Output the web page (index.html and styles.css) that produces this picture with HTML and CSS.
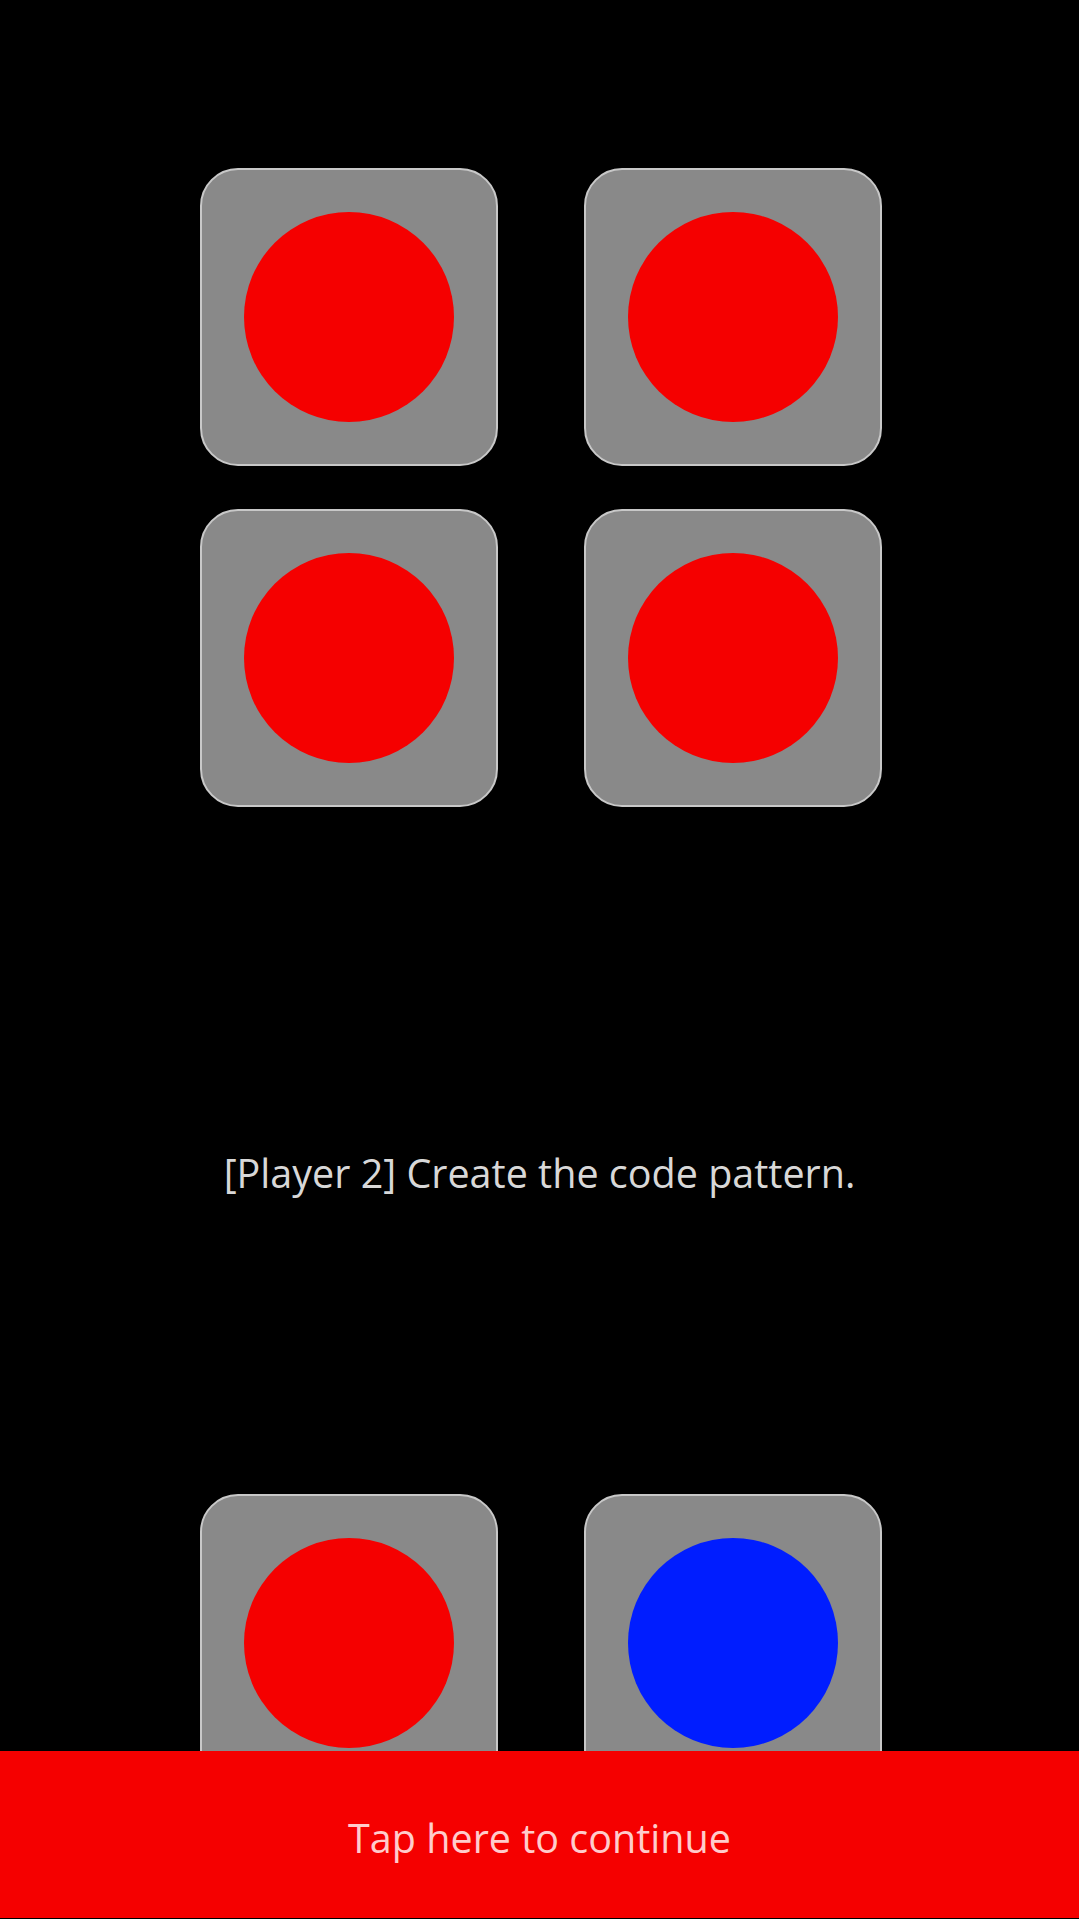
FILE: index.html
```html
<!DOCTYPE html>
<html lang="en">
<head>
<meta charset="utf-8">
<title>Code pattern</title>
<link rel="stylesheet" href="styles.css">
</head>
<body>
<main class="screen">
  <section class="grid grid-top">
    <div class="tile"><span class="dot dot-red"></span></div>
    <div class="tile"><span class="dot dot-red"></span></div>
    <div class="tile"><span class="dot dot-red"></span></div>
    <div class="tile"><span class="dot dot-red"></span></div>
  </section>
  <p class="prompt">[Player 2] Create the code pattern.</p>
  <section class="grid grid-bottom">
    <div class="tile"><span class="dot dot-red"></span></div>
    <div class="tile"><span class="dot dot-blue"></span></div>
  </section>
</main>
<button class="continue" type="button">Tap here to continue</button>
</body>
</html>
```
FILE: styles.css
```css
html, body {
  margin: 0;
  padding: 0;
  background: #000;
}
body {
  width: 1079px;
  height: 1919px;
  overflow: hidden;
  position: relative;
  font-family: "Open Sans", "Noto Sans", sans-serif;
}
.screen {
  display: flex;
  flex-direction: column;
  padding-top: 168px;
}
.grid {
  display: grid;
  grid-template-columns: 298px 298px;
  column-gap: 86px;
  row-gap: 43px;
  padding-left: 200px;
}
.tile {
  box-sizing: border-box;
  width: 298px;
  height: 298px;
  background: #898989;
  border: 2px solid #c8c8c8;
  border-radius: 38px;
  display: flex;
  align-items: center;
  justify-content: center;
}
.dot {
  width: 210px;
  height: 210px;
  border-radius: 50%;
}
.dot-red { background: #f50000; }
.dot-blue { background: #001dff; }
.prompt {
  margin: 342px 0 0;
  text-align: center;
  color: #d8d8d8;
  font-size: 39.5px;
  font-weight: 400;
  line-height: 48px;
}
.grid-bottom {
  margin-top: 297px;
}
.continue {
  position: absolute;
  left: 0;
  right: 0;
  bottom: 1px;
  height: 167px;
  border: 0;
  margin: 0;
  padding: 6px 0 0;
  background: #f50000;
  color: #ffcccc;
  font-family: "Open Sans", "Noto Sans", sans-serif;
  font-size: 39.5px;
  line-height: 48px;
  display: flex;
  align-items: center;
  justify-content: center;
  cursor: pointer;
}
```
